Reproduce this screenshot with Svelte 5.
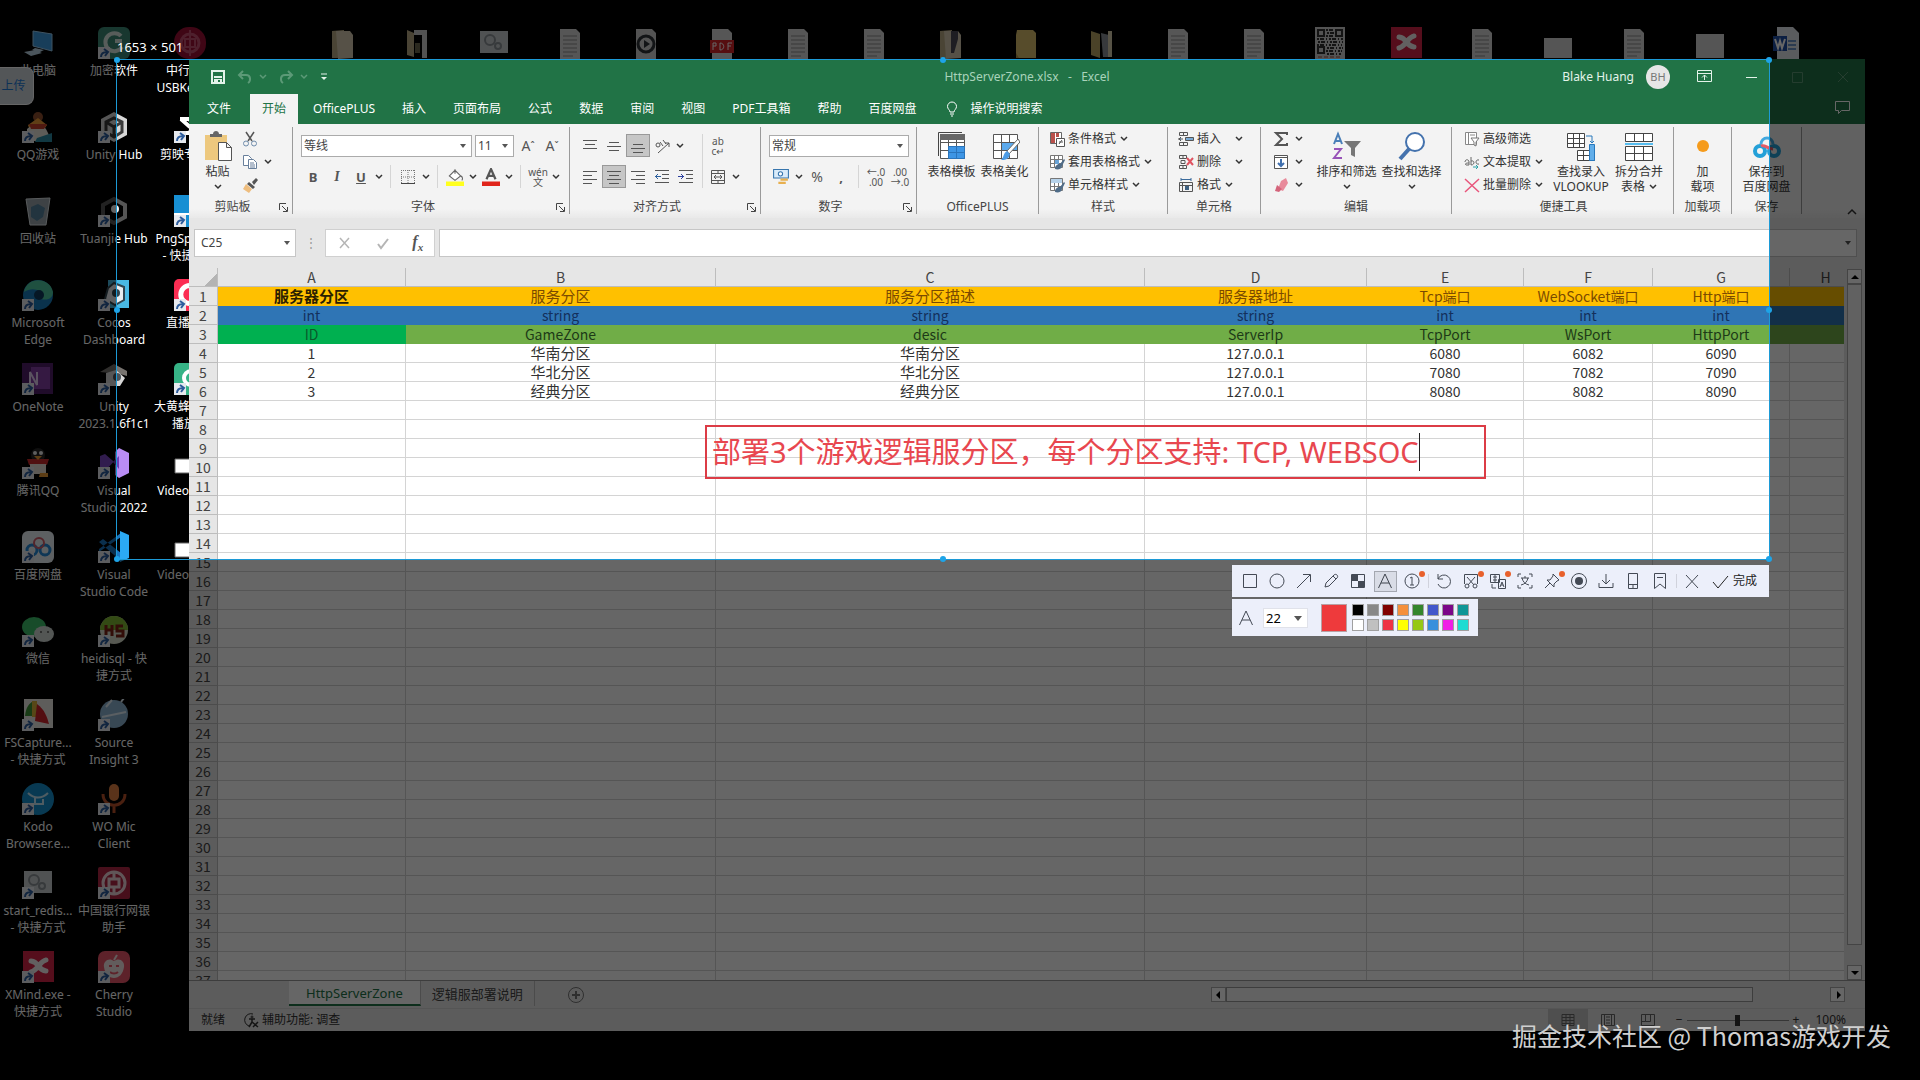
<script>
	let color = $state('#ee3a3c');
	let note = $state('部署3个游戏逻辑服分区，每个分区支持: TCP, WEBSOC');
	let zoom = $state(50);

	const svg = (body, size = 16, box = size) =>
		`<svg width="${size}" height="${size}" viewBox="0 0 ${box} ${box}" fill="none" stroke="currentColor" aria-hidden="true">${body}</svg>`;

	const sheetDoc = '<path fill="#d8d8d8" stroke="none" d="M6 2h16l4 4v26H6z"/><path stroke="#8c8c8c" d="M9 9h14M9 13h14M9 17h14M9 21h14M9 25h14M9 29h10"/>';
	const windowDoc = '<path fill="#c9cccf" stroke="none" d="M2 4h28v22H2z"/><circle cx="12" cy="13" r="5" stroke="#8b9196" stroke-width="2"/><circle cx="20" cy="19" r="3" stroke="#8b9196" stroke-width="2"/>';
	const folder = '<path fill="#b9ab86" stroke="none" d="M6 4l12-1v28H6z"/><path fill="#d6cbb1" stroke="none" d="M10 4h14l3 4v23l-15 1z"/>';

	const art = {
		pc: '<path fill="#3d9be0" stroke="#9ccdf0" d="M11 4l19 3v17l-19-5z"/><path fill="#bcd5e6" stroke="none" d="M13 21l9 2-4 2-8-2zM2 25l11-2 7 3-11 3z"/>',
		lock: '<rect width="32" height="32" rx="6" fill="#3c8b76" stroke="none"/><path stroke="#d9e8e2" stroke-width="4" d="M23 9a9 9 0 1 0 1 11M17 14h7"/>',
		bank: '<rect width="32" height="32" rx="15" fill="#9e0f35" stroke="none"/><circle cx="16" cy="16" r="9" stroke="#c45272" stroke-width="3"/><path stroke="#c45272" stroke-width="2" d="M16 3v26M11 12h10v8H11z"/>',
		penguin: '<circle cx="16" cy="6" r="5" fill="#8f4f2f" stroke="none"/><path fill="#ee9c38" stroke="none" d="M6 14l10-7 9 7-4 6H8z"/><path fill="#e9e5dc" stroke="none" d="M5 18c6-6 17-6 20 2l5 10H5z"/><path fill="#c5402b" stroke="none" d="M7 13h18l-3 5H9z"/><path fill="#2b8ca5" stroke="none" d="M15 27l15-5v9H13z"/>',
		unity: '<path fill="#d7d7d7" stroke="none" d="M16 1l13 7v16l-13 7-13-7V8z"/><path stroke="#3a3a3a" stroke-width="3" d="M16 7l8 4v10l-8 5-8-5V11zM16 16v10M16 16l8-5M16 16l-8-5"/>',
		cut: '<path stroke="#fff" stroke-width="4" d="M6 8h9l7 7M6 22h9l8-8M7 8l9 8"/>',
		bin: '<path fill="#9ba6ac" stroke="#dce2e5" d="M4 4l24-1-4 27H8z"/><path fill="#56829e" stroke="none" d="M9 12l7-3 7 4-2 9-6 4-6-4z"/>',
		tuanjie: '<path stroke="#555" stroke-width="4" d="M16 4l11 6v12l-11 6-11-6V10z"/><circle cx="17" cy="14" r="4" fill="#eee" stroke="none"/>',
		png: '<rect width="32" height="32" fill="#178fd3" stroke="none"/><path stroke="#fff" stroke-width="2" d="M0 19h32"/>',
		edge: '<circle cx="16" cy="16" r="15" fill="#197ebd" stroke="none"/><path fill="#4ec8a1" stroke="none" d="M2 13C5-3 28-2 31 13c0 6-5 9-12 7 3-8-7-13-17-7z"/><circle cx="17" cy="16" r="5" fill="#113b5c" stroke="none"/>',
		cocos: '<rect x="10" y="1" width="21" height="28" fill="#49b9e4" stroke="none"/><path fill="#e8ecef" stroke="#30444f" stroke-width="2" d="M16 4l10 4v13l-9 5-10-6 3-11z"/><circle cx="18" cy="14" r="4" fill="#30444f" stroke="none"/>',
		live: '<rect width="32" height="32" rx="5" fill="#fb2d53" stroke="none"/><path stroke="#fff" stroke-width="5" d="M22 22a9 9 0 1 1 0-13"/>',
		onenote: '<rect width="31" height="31" fill="#52206a" stroke="none"/><rect x="9" y="4" width="19" height="22" fill="#8440a6" stroke="none"/><path stroke="#e3cff0" stroke-width="2" d="M8 22V9l7 13V9"/>',
		unityhome: '<path fill="#77736f" stroke="none" d="M2 9L16 1l13 7v5l-7-2z"/><path fill="#d7d7d7" stroke="none" d="M8 10l10-3 9 8-5 8H8z"/><circle cx="19" cy="14" r="4" fill="#4b5258" stroke="none"/>',
		bee: '<rect width="32" height="32" rx="5" fill="#36b386" stroke="none"/><circle cx="17" cy="15" r="7" stroke="#fff" stroke-width="4"/>',
		qq: '<circle cx="16" cy="8" r="7" fill="#262626" stroke="none"/><circle cx="13" cy="6" r="2" fill="#eee" stroke="none"/><circle cx="19" cy="6" r="2" fill="#eee" stroke="none"/><path fill="#c92a28" stroke="none" d="M5 12h22l-2 6H7z"/><path fill="#e8e0d6" stroke="none" d="M8 17h16v10H8z"/><path fill="#e79a35" stroke="none" d="M12 9h8l-4 4zM18 26h8v4h-9z"/>',
		vs: '<path fill="#7a47c4" stroke="none" d="M2 9l5-2 15 13V8L7 24l-5-3z"/><path fill="#b98cf5" stroke="none" d="M21 1l10 5v20l-10 5-4-3V5z"/><path fill="#6e3fb8" stroke="none" d="M21 9l-6 6 6 7z"/>',
		video: '<path fill="#fff" stroke="#666" d="M1 12h30v14H1z"/>',
		pan: '<rect width="32" height="32" rx="6" fill="#e9eff5" stroke="none"/><circle cx="10" cy="19" r="5" stroke="#268ad6" stroke-width="3"/><circle cx="23" cy="19" r="5" stroke="#268ad6" stroke-width="3"/><circle cx="17" cy="12" r="5" stroke="#d35c6a" stroke-width="2"/>',
		code: '<path fill="#1976c0" stroke="none" d="M1 11l4-3 18 14v8zM1 21l22-15v-4L1 18z"/><path fill="#2ba9f4" stroke="none" d="M22 0l9 4v23l-9 4z"/>',
		wechat: '<ellipse cx="12" cy="12" rx="12" ry="10" fill="#3dbe6a" stroke="none"/><ellipse cx="22" cy="19" rx="10" ry="8" fill="#cfd6d3" stroke="none"/><circle cx="19" cy="17" r="1" fill="#555" stroke="none"/><circle cx="26" cy="17" r="1" fill="#555" stroke="none"/>',
		heidi: '<circle cx="16" cy="15" r="14" fill="#d9dfcc" stroke="none"/><path fill="#7fb834" stroke="none" d="M2 15a14 14 0 0 1 28 0z"/><path stroke="#7d2116" stroke-width="3" d="M8 10v11M14 10v11M8 15h6M25 11h-6v5h6v5h-7"/>',
		fs: '<rect x="2" width="29" height="29" fill="#ece9e4" stroke="none"/><path fill="#3f9437" stroke="none" d="M12 2v15H3C4 8 7 4 12 2z"/><path fill="#d9b23b" stroke="none" d="M10 2h5v16h-5z"/><path fill="#d0242c" stroke="none" d="M15 5c8 6 10 13 12 20l-14-3z"/>',
		insight: '<circle cx="16" cy="15" r="14" fill="#8db4d3" stroke="none"/><path stroke="#e0edf6" stroke-width="2" d="M4 18l24-5M8 8l6-7M23 3l3-4"/>',
		kodo: '<circle cx="16" cy="16" r="16" fill="#1690cc" stroke="none"/><path stroke="#c5e7f6" stroke-width="2" d="M6 10c6 6 14 6 20 0M13 14v7h8v-5"/>',
		mic: '<rect x="11" y="1" width="10" height="17" rx="5" fill="#e08043" stroke="none"/><path stroke="#b8502a" stroke-width="3" d="M5 11c0 15 22 15 22 0M16 23v7"/>',
		boc: '<rect width="32" height="32" rx="2" fill="#b22744" stroke="none"/><circle cx="16" cy="16" r="11" stroke="#f0d8dd" stroke-width="3"/><path stroke="#f0d8dd" stroke-width="3" d="M16 5v6M16 21v6M11 12h10v8H11z"/>',
		xmind: '<rect width="31" height="31" x="1" fill="#d42348" stroke="none"/><path stroke="#f5f1f1" stroke-width="5" stroke-linecap="round" d="M9 10c9 1 6 9 15 10M24 9c-6 1-8 10-15 12"/>',
		cherry: '<rect width="32" height="32" rx="7" fill="#e8566a" stroke="none"/><path fill="#f6e7e6" stroke="none" d="M16 10c5-4 11 0 10 6-1 7-5 11-10 11S7 23 6 16c-1-6 5-10 10-6z"/><path stroke="#f6e7e6" stroke-width="2" d="M16 9l3-5"/><path stroke="#e8566a" stroke-width="2" d="M11 15h3M18 15h3M12 21c2 2 6 2 8 0"/>',
		folder,
		open: '<path fill="#b8ab86" stroke="none" d="M5 3l7 3v24l-7-2z"/><path fill="#cdcdcd" stroke="none" d="M12 3h13v28h-5V8h-8z"/><path fill="#6d684f" stroke="none" d="M13 16h5v10h-5z"/>',
		windowDoc,
		sheetDoc,
		media: '<path fill="#cfcfcf" stroke="none" d="M6 2h16l4 4v26H6z"/><circle cx="16" cy="17" r="8" stroke="#2e3338" stroke-width="3"/><path fill="#2e3338" stroke="none" d="M14 13l6 4-6 4z"/>',
		pdf: '<path fill="#d8d8d8" stroke="none" d="M6 2h16l4 4v26H6z"/><path fill="#d8232a" stroke="none" d="M4 13h24v13H4z"/><path stroke="#fff" d="M7 23v-7h3v3H7M14 16v7c5 0 5-7 0-7M22 23v-7h4M22 19h3"/>',
		mixed: folder + '<path fill="#4b4a55" stroke="none" d="M17 4h7v8l-4 14h-3z"/>',
		yellow: '<path fill="#d9bd6b" stroke="none" d="M7 3h16l3 3v25H6V8z"/><path fill="#b39645" stroke="none" d="M6 26l3 5h-3z"/>',
		split: '<path fill="#b9a565" stroke="none" d="M5 4l9 3v24l-9-3z"/><path fill="#899097" stroke="none" d="M15 6l8 2v22h-6z"/><path fill="#d9d0b0" stroke="none" d="M22 4h4v26h-4z"/>',
		qr: '<rect x="1" y="0" width="30" height="32" fill="#cfcfcf" stroke="none"/><path stroke="#333" stroke-width="2" d="M4 3h6v6H4zM22 3h6v6h-6zM4 20h6v6H4z"/><path stroke="#333" stroke-width="2" stroke-dasharray="2 1 4 2 1 2" d="M12 3h8M13 6h8M12 9h8M3 12h26M4 15h25M3 18h25M13 21h16M12 24h16M13 27h15"/><path stroke="#a54c3c" stroke-dasharray="4 2" d="M4 30h24"/>',
		card: '<path fill="#d4d4d4" stroke="none" d="M2 11h28v20H2z"/>',
		bigcard: '<path fill="#d4d4d4" stroke="none" d="M2 7h28v24H2z"/>',
		word: '<path fill="#e2e5ea" stroke="none" d="M7 0h16l6 6v26H7z"/><path stroke="#6d94c9" stroke-width="2" d="M18 14h8M18 18h8M18 22h8"/><path fill="#1f4fa5" stroke="none" d="M3 9h14v15H3z"/><path stroke="#fff" stroke-width="2" d="M5 12l3 9 2-7 2 7 3-9"/>'
	};

	const item = (icon, lines = [], link = false) => ({ icon, lines, link });

	const desktop = [
		[
			item('pc', ['此电脑']),
			item('penguin', ['QQ游戏'], true),
			item('bin', ['回收站']),
			item('edge', ['Microsoft', 'Edge'], true),
			item('onenote', ['OneNote'], true),
			item('qq', ['腾讯QQ'], true),
			item('pan', ['百度网盘'], true),
			item('wechat', ['微信'], true),
			item('fs', ['FSCapture...', '- 快捷方式'], true),
			item('kodo', ['Kodo', 'Browser.e...'], true),
			item('windowDoc', ['start_redis...', '- 快捷方式'], true),
			item('xmind', ['XMind.exe -', '快捷方式'], true)
		],
		[
			item('lock', ['加密软件'], true),
			item('unity', ['Unity Hub'], true),
			item('tuanjie', ['Tuanjie Hub'], true),
			item('cocos', ['Cocos', 'Dashboard'], true),
			item('unityhome', ['Unity', '2023.1.6f1c1'], true),
			item('vs', ['Visual', 'Studio 2022'], true),
			item('code', ['Visual', 'Studio Code'], true),
			item('heidi', ['heidisql - 快', '捷方式'], true),
			item('insight', ['Source', 'Insight 3'], true),
			item('mic', ['WO Mic', 'Client'], true),
			item('boc', ['中国银行网银', '助手'], true),
			item('cherry', ['Cherry', 'Studio'], true)
		],
		[
			item('bank', ['中行网银', 'USBKey工具']),
			item('cut', ['剪映专业版'], true),
			item('png', ['PngSplit.exe', '- 快捷方式'], true),
			item('live', ['直播伴侣'], true),
			item('bee', ['大黄蜂云课堂', '播放器'], true),
			item('video', ['VideoEditor']),
			item('video', ['VideoEditor'])
		],
		[],
		...['folder', 'open', 'windowDoc', 'sheetDoc', 'media', 'pdf', 'sheetDoc', 'sheetDoc', 'mixed', 'yellow', 'split', 'sheetDoc', 'sheetDoc', 'qr', 'xmind', 'sheetDoc', 'card', 'sheetDoc', 'bigcard', 'word'].map((icon) => [item(icon)])
	];

	const grid = '<path fill="#fff" stroke="#555" d="M3.5 3.5h24v24h-24zM3.5 11.5h24M3.5 19.5h24M11.5 3.5v24M19.5 3.5v24"/>';
	const miniGrid = '<path fill="#fff" stroke="#777" d="M1.5 1.5h12v12h-12zM1.5 5.5h12M1.5 9.5h12M5.5 1.5v12M9.5 1.5v12"/>';

	const icons = {
		save: svg('<path stroke-width="2" d="M2 2h12v12H2zM4 8h8"/><path fill="currentColor" stroke="none" d="M4 10h8v4h-2v-3H8v3H4z"/>'),
		undo: svg('<path stroke-width="2" d="M6 2L2 6l4 4M2 6h7c5 0 5 6 2 8"/>'),
		redo: svg('<path stroke-width="2" d="M10 2l4 4-4 4M14 6H7c-5 0-5 6-2 8"/>'),
		qat: svg('<path d="M2 2h6"/><path fill="currentColor" stroke="none" d="M2 5h6L5 8z"/>', 10),
		ribbonOpts: svg('<path d="M1.5 2.500h14v11h-14zM1.500 5.500h14M8.500 12V7M6 9.500L8.500 7 11 9.500"/>', 17),
		min: svg('<path d="M3 8.500h11"/>'),
		max: svg('<path d="M3.500 3.500h10v10h-10z"/>'),
		close: svg('<path d="M3 3l10 10M13 3L3 13"/>'),
		comment: svg('<path d="M1.500 2.500h14v9h-8l-3 3v-3h-3z"/>', 17),
		bulb: svg('<path d="M6 11c0-2-2.500-3-2.500-5.500a4.500 4.500 0 0 1 9 0C12.500 8 10 9 10 11zM6 13h4M7 15h2"/>'),
		caret: svg('<path stroke-width="1.500" d="M1 2l3 3 3-3"/>', 8),
		launch: svg('<path d="M1.500 8V1.500H8M4 4l5 5M9.500 5v4.500H5"/>', 11),
		paste: svg('<path fill="#edc87e" stroke="none" d="M2 4h22v25H2z"/><path fill="#666" stroke="none" d="M7 6V3h3c0-4 6-4 6 0h3v3z"/><path fill="#fff" stroke="#555" d="M15.500 11.500h8l5 5v13h-13zM23.500 11.500v5h5"/>', 30),
		cut: svg('<path stroke="#555" stroke-width="1.500" d="M4 1l6 9M12 1l-6 9"/><circle cx="4" cy="12.500" r="2.500" stroke="#6f8cab"/><circle cx="12" cy="12.500" r="2.500" stroke="#6f8cab"/>'),
		copy: svg('<path fill="#fff" stroke="#687f9b" d="M1.500 1.500h5l3 3v7h-8z"/><path fill="#fff" stroke="#687f9b" d="M6.500 5.500h5l3 3v6h-8zM8 9h4M8 11h5M8 13h5"/>'),
		brush: svg('<path fill="#555" stroke="none" d="M10 5l4-4 2 2-4 5zM7 5l6 5-2 2-6-5z"/><path fill="#eebd7e" stroke="none" d="M4 7l6 5-3 4-6-4z"/>'),
		bold: '<b>B</b>',
		italic: '<i>I</i>',
		underline: '<b><u>U</u></b>',
		bigA: 'A<sup>ˆ</sup>',
		smallA: 'A<sup>ˇ</sup>',
		borders: svg('<path stroke="#777" stroke-dasharray="1 1" d="M1.500 1v13M8 1v13M14.500 1v13M1 1.500h14M1 8h14"/><path stroke="#444" d="M1 14.500h14"/>'),
		fill: svg('<path fill="#fff" stroke="#666" d="M3 7l5-5 5 5-5 4zM8 1v4M13 7c2 1 2 3 1 4"/><path fill="#ffff1e" stroke="none" d="M0 12h16v4H0z"/>', 18, 16),
		fontColor: svg('<path stroke="#555" stroke-width="2" d="M4 10L8 1l4 9M5 7h6"/><path fill="#e0241b" stroke="none" d="M0 12h16v4H0z"/>', 18, 16),
		wen: '<span class="wen">wén<br />文</span>',
		aTop: svg('<path d="M1 2.500h14M3 6.500h10M1 10.500h14"/>'),
		aMid: svg('<path d="M3 4.500h10M1 8.500h14M3 12.500h10"/>'),
		aBottom: svg('<path d="M3 6.500h10M1 10.500h14M3 14.500h10"/>'),
		orient: svg('<path d="M4 15L15 5M15 9V5h-4"/><circle cx="4" cy="7" r="2"/><path d="M6 4l3 4M9 2l3 4"/>'),
		wrap: '<span class="wrap">ab<br />c↵</span>',
		left: svg('<path d="M1 2.500h14M1 6.500h9M1 10.500h14M1 14.500h9"/>'),
		center: svg('<path d="M1 2.500h14M3 6.500h10M1 10.500h14M3 14.500h10"/>'),
		right: svg('<path d="M1 2.500h14M6 6.500h9M1 10.500h14M6 14.500h9"/>'),
		outdent: svg('<path d="M1 1.500h14M8 5.500h7M8 9.500h7M1 13.500h14"/><path stroke="#2b5f9e" d="M7 7.500H1M4 5L1.500 7.500 4 10"/>'),
		indent: svg('<path d="M1 1.500h14M8 5.500h7M8 9.500h7M1 13.500h14"/><path stroke="#2b3f9e" d="M0 7.500h6M3 5l2.500 2.500L3 10"/>'),
		merge: svg('<path d="M1.500 1.500h13v13h-13zM1.500 4.500h13M1.500 11.500h13M8 1.500v3M8 11.500v3M4 8h8M6 6L4 8l2 2M10 6l2 2-2 2"/>'),
		money: svg('<path fill="#d9ebfa" stroke="#3775ad" d="M1.500 1.500h14v8h-14z"/><circle cx="8" cy="5.500" r="2" fill="#fff" stroke="#3775ad"/><path stroke="#e8b04f" stroke-width="2" d="M8 11h7M6 14h7"/>', 18, 17),
		percent: '%',
		comma: '<b>,</b>',
		decInc: '<span class="dec">←.0<br />.00</span>',
		decDec: '<span class="dec">.00<br />→.0</span>',
		tplate: svg('<path stroke="#444" d="M1.500 25V1.500H25"/>' + grid + '<path fill="#666" stroke="none" d="M3 3h25v6H3z"/><path fill="#3d95e5" stroke="#2a74bb" d="M11.500 15.500h16v12h-16zM19.500 15.500v12M11.500 21.500h16"/>', 30),
		beauty: svg(grid + '<path fill="#5ba9ec" stroke="none" d="M12 12h15v7H12z"/><path fill="#fff" stroke="#666" d="M28 8L17 20l2 3L30 11z"/><path fill="#4b9be6" stroke="none" d="M17 20l3 3c-1 6-6 6-9 6 3-2 2-7 6-9z"/>', 30),
		cond: svg('<path fill="#fff" stroke="#666" d="M1.500 1.500h11v11h-11z"/><path fill="#b9504b" stroke="none" d="M2 2h4v10H2zM7 2h3v4H7z"/><path fill="#fff" stroke="#555" d="M7.500 7.500h8v8h-8zM10 13l3-4M10 11h4"/>'),
		tableFmt: svg(miniGrid + '<path fill="#69a4d8" stroke="none" d="M6 6h4v4H6z"/><path fill="#4f6c88" stroke="none" d="M6 15c0-4 3-5 5-5l4-5 1 1-3 6c0 3-4 4-7 3z"/>'),
		cellFmt: svg(miniGrid + '<path fill="#b6d2ea" stroke="none" d="M2 2h11v4H2z"/><path fill="#4f6c88" stroke="none" d="M6 15c0-4 3-5 5-5l4-5 1 1-3 6c0 3-4 4-7 3z"/>'),
		insCell: svg('<path stroke="#555" d="M1.500 1.500h8v3h-8zM1.500 11.500h8v3h-8zM5.500 1v4M5.500 11v4"/><path fill="#79aad5" stroke="#555" d="M7.500 6.500h8v3h-8zM5 8H0M3 6L1 8l2 2"/>'),
		delCell: svg('<path stroke="#555" d="M1.500 1.500h7v3h-7zM1.500 11.500h7v3h-7zM5 1v4M5 11v4M3 6.500h4v3H3z"/><path stroke="#e05360" stroke-width="2" d="M9 4l6 7M15 4l-6 7"/>'),
		fmtCell: svg('<path stroke="#3a6b9c" d="M3 1v3M13 1v3M3 2.500h10"/><path stroke="#555" d="M1.500 5.500h13v9h-13zM4.500 5.500v9M1.500 8.500h13"/><path fill="#3d5f80" stroke="none" d="M7 9h4v4H7z"/>'),
		sum: svg('<path stroke="#555" stroke-width="2" d="M14 4V2H3l6 6-6 6h11v-2"/>'),
		fillDown: svg('<path fill="#fff" stroke="#555" d="M1.500 1.500h13v13h-13zM1.500 3.500h13"/><path stroke="#3f6fae" stroke-width="2" d="M8 5v7M5 9l3 3 3-3"/>'),
		eraser: svg('<path fill="#e88a9b" stroke="none" d="M8 4l5-3 2 5-5 8-5-2z"/><path fill="#d4647b" stroke="none" d="M4 8l5 4-3 3-4-1z"/>'),
		sort: svg('<path stroke="#4a7fb8" stroke-width="2" d="M2 13L6 3l4 10M3 10h6"/><path stroke="#9752b8" stroke-width="2" d="M2 18h7l-7 9h8"/><path fill="#777" stroke="none" d="M12 10h17l-6 7v9l-4-2v-7z"/>', 30),
		find: svg('<circle cx="18" cy="11" r="9" fill="#fff" stroke="#4472ad" stroke-width="2"/><path stroke="#4472ad" stroke-width="4" d="M12 18L3 28"/>', 30),
		adv: svg('<path fill="#fff" stroke="#888" d="M1.500 1.500h11v12h-11zM4.500 2v11M6 4h5"/><path fill="#fff" stroke="#777" d="M7 7h8l-3 4v4l-2-1v-3z"/>'),
		abc: svg('<path stroke="#666" d="M1 8c0-3 4-3 4 0v3H2c-2-2 2-2 3-2M7 3v8c4 0 4-5 0-4M15 6c-4-1-4 5 0 4"/><path stroke="#2ba3a8" d="M9 13h5M12 11l2 2-2 2"/>'),
		del: svg('<path stroke="#e8557b" stroke-width="1.500" d="M1 2l14 13M15 2L1 15"/>'),
		lookup: svg('<path fill="#fff" stroke="#444" d="M1.500 2.500h17v14h-17zM1.500 7.500h17M1.500 12.500h17M7.500 2.500v14M13.500 2.500v14M11.500 19.500h17v10h-17zM11.500 24.500h17M17.500 19.500v10"/><path fill="#62aeea" stroke="#2878bc" d="M23.500 13.500h5v16h-5z"/><path stroke="#2878bc" d="M20 5h6v7M24 10l2 2 2-2"/>', 30),
		splitTbl: svg('<path fill="#fff" stroke="#444" d="M1.500 2.500h27v8h-27zM10.500 2.500v8M19.500 2.500v8M1.500 15.500h27v14h-27zM1.500 22.500h27M10.500 15.500v14M19.500 15.500v14"/><path stroke="#55bdf0" stroke-width="2" d="M1 13h28"/>', 30),
		dot: svg('<circle cx="15" cy="15" r="6" fill="#f59b1c" stroke="none"/>', 30),
		cloud: svg('<circle cx="8" cy="20" r="5" stroke="#23a0d8" stroke-width="4"/><circle cx="22" cy="20" r="5" stroke="#23a0d8" stroke-width="4"/><path stroke="#41a8df" stroke-width="3" d="M9 13a6 6 0 0 1 12 0"/><path stroke="#e55b66" stroke-width="3" d="M9 15c4-2 6 3 12 3"/>', 30),
		collapse: svg('<path stroke-width="1.500" d="M1 7l4-4 4 4"/>', 10),
		xGray: svg('<path stroke="#b5b5b5" stroke-width="1.500" d="M3 3l9 10M12 3L3 13"/>'),
		okGray: svg('<path stroke="#b5b5b5" stroke-width="2" d="M3 9l3 4 7-9"/>'),
		access: svg('<path d="M10 2a6 6 0 1 0-4 12"/><circle cx="9" cy="5" r="1"/><path stroke-width="1.500" d="M6 7h6M9 7v3l-3 5M9 10l6 5M10 15l5-5"/>'),
		plus: svg('<circle cx="9" cy="9" r="7.500"/><path stroke-width="2" d="M9 5v8M5 9h8"/>', 18),
		viewNormal: svg('<path d="M2 2.500h12v11H2zM2 5.500h12M2 8.500h12M2 11.500h12M6 2v12M10 2v12"/>'),
		viewPage: svg('<path d="M1.500 2.500h13v11h-13zM4.500 2.500v11M11.500 2.500v11M6 5h4M6 8h4M6 11h4"/>'),
		viewBreak: svg('<path d="M1.500 2.500h13v11h-13zM5.500 2.500v7h5v-7M1.500 9.500h4"/>'),
		arrowL: svg('<path fill="currentColor" stroke="none" d="M6 1v8L2 5z"/>', 10),
		arrowR: svg('<path fill="currentColor" stroke="none" d="M4 1v8l4-4z"/>', 10),
		arrowU: svg('<path fill="currentColor" stroke="none" d="M1 7h8L5 3z"/>', 10),
		arrowD: svg('<path fill="currentColor" stroke="none" d="M1 3h8L5 7z"/>', 10)
	};

	const shot = {
		rect: '<path d="M2.500 2.500h13v13h-13z"/>',
		circle: '<circle cx="9" cy="9" r="7"/>',
		arrow: '<path d="M2 16L15 3M8 2.500h7.500V10"/>',
		pencil: '<path d="M3 15l1-4 8-8c2-2 5 1 3 3l-8 8zM11 4l3 3"/>',
		mosaic: '<path d="M2.500 2.500h13v13h-13z"/><path fill="currentColor" stroke="none" d="M2 3h7v6H2zM9 9h6v6H9z"/>',
		text: '<path d="M2.500 16L9 2l6.500 14M5 11h8"/>',
		number: '<circle cx="9" cy="9" r="7"/><path d="M7 6l2-1v8M7 13h4"/>',
		undo: '<path d="M3 2v5h5M3 7a6.500 6.500 0 1 1 0 5"/>',
		scissors: '<path d="M2.500 12V2.500h13V12M5 5l7 8M13 5l-7 8"/><circle cx="5" cy="14" r="2"/><circle cx="13" cy="14" r="2"/>',
		translate: '<path d="M1.500 2.500h9v8h-9zM4 5h4M4 8h4M6 3v7"/><path d="M9.500 7.500h7v9h-7zM11 15l2-5 2 5M12 13h2M3 12v4h4"/>',
		ocr: '<path d="M2 5V2h3M13 2h3v3M16 13v3h-3M5 16H2v-3M5 6h8M9 4v2M12 6c-1 4-3 6-7 7M6 6c1 4 3 6 7 7"/>',
		pin: '<path d="M10 2l6 6-2 1-3 3v3L4 8h3l3-4zM7 11l-5 5"/>',
		record: '<circle cx="9" cy="9" r="7.500"/><circle cx="9" cy="9" r="4" fill="currentColor" stroke="none"/>',
		download: '<path d="M9 2v10M5 8l4 4 4-4M2 11v4.500h14V11"/>',
		phone: '<path d="M4.500 1.500h9v15h-9zM4.500 12.500h9M9 12v4"/>',
		bookmark: '<path d="M3.500 1.500h11v15L9 12l-5.500 4.500zM6 5.500h6"/>'
	};

	const shotTools = [
		{ icon: 'rect', label: '矩形' },
		{ icon: 'circle', label: '椭圆' },
		{ icon: 'arrow', label: '箭头' },
		{ icon: 'pencil', label: '画笔' },
		{ icon: 'mosaic', label: '马赛克' },
		{ icon: 'text', label: '文字', active: true },
		{ icon: 'number', label: '序号', badge: true }
	];
	const shotActions = [
		{ icon: 'undo', label: '撤销' },
		{ icon: 'scissors', label: '裁剪', badge: true },
		{ icon: 'translate', label: '翻译', badge: true },
		{ icon: 'ocr', label: '识别文字' },
		{ icon: 'pin', label: '固定', badge: true },
		{ icon: 'record', label: '录屏' },
		{ icon: 'download', label: '保存' },
		{ icon: 'phone', label: '发送到手机' },
		{ icon: 'bookmark', label: '收藏' }
	];

	const palette = [
		'#000000', '#888888', '#800000', '#f5903c', '#34852c', '#4257cb', '#7b0788', '#109696',
		'#ffffff', '#c0c0c0', '#ee3344', '#ffff00', '#96c814', '#3690dc', '#f01ee6', '#1edcd2'
	];

	const tabs = ['插入', '页面布局', '公式', '数据', '审阅', '视图', 'PDF工具箱', '帮助', '百度网盘'];

	const columns = [
		{ name: 'A', width: 188 },
		{ name: 'B', width: 310 },
		{ name: 'C', width: 429 },
		{ name: 'D', width: 222 },
		{ name: 'E', width: 157 },
		{ name: 'F', width: 129 },
		{ name: 'G', width: 137 },
		{ name: 'H', width: 72 }
	];

	const cells = [
		['服务器分区', '服务分区', '服务分区描述', '服务器地址', 'Tcp端口', 'WebSocket端口', 'Http端口'],
		['int', 'string', 'string', 'string', 'int', 'int', 'int'],
		['ID', 'GameZone', 'desic', 'ServerIp', 'TcpPort', 'WsPort', 'HttpPort'],
		['1', '华南分区', '华南分区', '127.0.0.1', '6080', '6082', '6090'],
		['2', '华北分区', '华北分区', '127.0.0.1', '7080', '7082', '7090'],
		['3', '经典分区', '经典分区', '127.0.0.1', '8080', '8082', '8090']
	];
	const rows = Array.from({ length: 37 }, (_, i) => cells[i] ?? []);
	const isCjk = (text) => /^[\u4e00-\u9fff]/.test(text ?? '');
</script>

{#snippet tool(icon, label, caret = false, active = false)}
	<button class="tool" class:active aria-label={label}>{@html icons[icon]}</button>
	{#if caret}
		<button class="drop" aria-label="{label}选项">{@html icons.caret}</button>
	{/if}
{/snippet}

{#snippet small(icon, text, caret = true, wide = false)}
	<button class="small">
		<span class="small-icon">{@html icons[icon]}</span>
		{text}
		{#if caret}<span class="small-caret" class:wide>{@html icons.caret}</span>{/if}
	</button>
{/snippet}

{#snippet large(icon, first, second = '', caret = false)}
	<button class="large">
		{@html icons[icon]}
		<span class="line">{first}</span>
		<span class="line">{second}{#if caret}<span class="line-caret" class:alone={!second}>{@html icons.caret}</span>{/if}</span>
	</button>
{/snippet}

{#snippet groupName(name, launcher = false)}
	<div class="group-name" class:has-launcher={launcher}>
		<span>{name}</span>
		{#if launcher}<button class="launcher" aria-label="{name}设置">{@html icons.launch}</button>{/if}
	</div>
{/snippet}

<main class="desktop">
	<div class="shortcuts">
		{#each desktop as column}
			<div class="shortcuts-col">
				{#each column as entry}
					<div class="shortcut">
						<div class="shortcut-icon">
							{@html svg(art[entry.icon], 32)}
							{#if entry.link}<span class="link-mark">{@html svg('<path stroke="#2c5c9d" stroke-width="2" d="M3 10c0-4 2-5 6-5M6 2l4 3-3 4"/>', 12)}</span>{/if}
						</div>
						{#each entry.lines as line}<span class="shortcut-line">{line}</span>{/each}
					</div>
				{/each}
			</div>
		{/each}
	</div>
	<button class="upload">上传</button>

	<section class="excel">
		<header class="titlebar">
			<div class="quick">
				<button aria-label="保存">{@html icons.save}</button>
				<button class="faded" aria-label="撤消">{@html icons.undo}{@html icons.caret}</button>
				<button class="faded" aria-label="恢复">{@html icons.redo}{@html icons.caret}</button>
				<button aria-label="自定义快速访问工具栏">{@html icons.qat}</button>
			</div>
			<span class="doc-title">HttpServerZone.xlsx&nbsp;&nbsp; -&nbsp;&nbsp; Excel</span>
			<div class="account">
				<span>Blake Huang</span>
				<span class="avatar">BH</span>
				<button aria-label="功能区显示选项">{@html icons.ribbonOpts}</button>
				<button aria-label="最小化">{@html icons.min}</button>
				<button class="faded" aria-label="最大化">{@html icons.max}</button>
				<button class="faded" aria-label="关闭">{@html icons.close}</button>
			</div>
		</header>

		<nav class="tabs">
			<button class="tab file">文件</button>
			<button class="tab current">开始</button>
			<button class="tab">OfficePLUS</button>
			{#each tabs as tab}
				<button class="tab">{tab}</button>
			{/each}
			<button class="tell">{@html icons.bulb} 操作说明搜索</button>
			<button class="comments" aria-label="批注">{@html icons.comment}</button>
		</nav>

		<div class="ribbon">
			<div class="group clipboard">
				<div class="body">
					{@render large('paste', '粘贴', '', true)}
					<div class="stack">
						<div class="row">{@render tool('cut', '剪切')}</div>
						<div class="row">{@render tool('copy', '复制', true)}</div>
						<div class="row">{@render tool('brush', '格式刷')}</div>
					</div>
				</div>
				{@render groupName('剪贴板', true)}
			</div>

			<div class="group font">
				<div class="body two">
					<div class="row">
						<span class="combo family"><select aria-label="字体"><option>等线</option></select></span>
						<span class="combo size"><select aria-label="字号"><option>11</option></select></span>
						{@render tool('bigA', '增大字号')}
						{@render tool('smallA', '减小字号')}
					</div>
					<div class="row">
						{@render tool('bold', '加粗')}
						{@render tool('italic', '倾斜')}
						{@render tool('underline', '下划线', true)}
						<i class="sep"></i>
						{@render tool('borders', '边框', true)}
						<i class="sep"></i>
						{@render tool('fill', '填充颜色', true)}
						{@render tool('fontColor', '字体颜色', true)}
						<i class="sep"></i>
						{@render tool('wen', '拼音指南', true)}
					</div>
				</div>
				{@render groupName('字体', true)}
			</div>

			<div class="group align">
				<div class="body">
					<div class="two">
						<div class="row">
							{@render tool('aTop', '顶端对齐')}
							{@render tool('aMid', '垂直居中')}
							{@render tool('aBottom', '底端对齐', false, true)}
							{@render tool('orient', '方向', true)}
						</div>
						<div class="row">
							{@render tool('left', '左对齐')}
							{@render tool('center', '居中', false, true)}
							{@render tool('right', '右对齐')}
							{@render tool('outdent', '减少缩进量')}
							{@render tool('indent', '增加缩进量')}
						</div>
					</div>
					<i class="sep tall"></i>
					<div class="two">
						<div class="row">{@render tool('wrap', '自动换行')}</div>
						<div class="row">{@render tool('merge', '合并后居中', true)}</div>
					</div>
				</div>
				{@render groupName('对齐方式', true)}
			</div>

			<div class="group number">
				<div class="body two">
					<div class="row">
						<span class="combo format"><select aria-label="数字格式"><option>常规</option></select></span>
					</div>
					<div class="row">
						{@render tool('money', '会计数字格式', true)}
						{@render tool('percent', '百分比样式')}
						{@render tool('comma', '千位分隔样式')}
						<i class="sep"></i>
						{@render tool('decInc', '增加小数位数')}
						{@render tool('decDec', '减少小数位数')}
					</div>
				</div>
				{@render groupName('数字', true)}
			</div>

			<div class="group plus">
				<div class="body">
					{@render large('tplate', '表格模板')}
					{@render large('beauty', '表格美化')}
				</div>
				{@render groupName('OfficePLUS')}
			</div>

			<div class="group styles">
				<div class="body stack">
					{@render small('cond', '条件格式')}
					{@render small('tableFmt', '套用表格格式')}
					{@render small('cellFmt', '单元格样式')}
				</div>
				{@render groupName('样式')}
			</div>

			<div class="group cells">
				<div class="body stack">
					{@render small('insCell', '插入', true, true)}
					{@render small('delCell', '删除', true, true)}
					{@render small('fmtCell', '格式')}
				</div>
				{@render groupName('单元格')}
			</div>

			<div class="group edit">
				<div class="body">
					<div class="stack">
						<div class="row">{@render tool('sum', '自动求和', true)}</div>
						<div class="row">{@render tool('fillDown', '填充', true)}</div>
						<div class="row">{@render tool('eraser', '清除', true)}</div>
					</div>
					{@render large('sort', '排序和筛选', '', true)}
					{@render large('find', '查找和选择', '', true)}
				</div>
				{@render groupName('编辑')}
			</div>

			<div class="group quicktools">
				<div class="body">
					<div class="stack">
						{@render small('adv', '高级筛选', false)}
						{@render small('abc', '文本提取')}
						{@render small('del', '批量删除')}
					</div>
					{@render large('lookup', '查找录入', 'VLOOKUP')}
					{@render large('splitTbl', '拆分合并', '表格', true)}
				</div>
				{@render groupName('便捷工具')}
			</div>

			<div class="group addins">
				<div class="body">{@render large('dot', '加', '载项')}</div>
				{@render groupName('加载项')}
			</div>

			<div class="group store">
				<div class="body">{@render large('cloud', '保存到', '百度网盘')}</div>
				{@render groupName('保存')}
			</div>

			<button class="collapse" aria-label="折叠功能区">{@html icons.collapse}</button>
		</div>

		<div class="formula">
			<span class="combo namebox"><input aria-label="名称框" value="C25" /></span>
			<span class="grip">⋮</span>
			<div class="formula-actions">
				<button aria-label="取消">{@html icons.xGray}</button>
				<button aria-label="输入">{@html icons.okGray}</button>
				<button class="fx" aria-label="插入函数">f<sub>x</sub></button>
			</div>
			<span class="combo formula-field"><input aria-label="编辑栏" /></span>
		</div>

		<div class="sheet">
			<div class="sheet-view">
				<table>
					<colgroup>
						<col style="width: 29px" />
						{#each columns as column}<col style="width: {column.width}px" />{/each}
					</colgroup>
					<thead>
						<tr>
							<th class="corner" aria-label="全选"></th>
							{#each columns as column}<th>{column.name}</th>{/each}
						</tr>
					</thead>
					<tbody>
						{#each rows as row, r}
							<tr class="r{r + 1}">
								<th>{r + 1}</th>
								{#each columns as column, c}
									<td class:cjk={isCjk(row[c])}>{row[c] ?? ''}</td>
								{/each}
							</tr>
						{/each}
					</tbody>
				</table>
			</div>
			<div class="vscroll">
				<button aria-label="向上滚动">{@html icons.arrowU}</button>
				<span class="vthumb"></span>
				<button aria-label="向下滚动">{@html icons.arrowD}</button>
			</div>
		</div>

		<div class="sheet-tabs">
			<button class="sheet-tab on">HttpServerZone</button>
			<button class="sheet-tab">逻辑服部署说明</button>
			<button class="add-sheet" aria-label="新工作表">{@html icons.plus}</button>
			<div class="hscroll">
				<button aria-label="向左滚动">{@html icons.arrowL}</button>
				<span class="hthumb"></span>
				<button class="end" aria-label="向右滚动">{@html icons.arrowR}</button>
			</div>
		</div>

		<footer class="status">
			<span>就绪</span>
			<span class="access">{@html icons.access} 辅助功能: 调查</span>
			<div class="views">
				<button class="view on" aria-label="普通">{@html icons.viewNormal}</button>
				<button class="view" aria-label="页面布局">{@html icons.viewPage}</button>
				<button class="view" aria-label="分页预览">{@html icons.viewBreak}</button>
				<button class="zoom-out" aria-label="缩小">−</button>
				<input type="range" aria-label="缩放" min="0" max="100" bind:value={zoom} />
				<button aria-label="放大">+</button>
				<span class="percent">100%</span>
			</div>
		</footer>
	</section>

	<!-- Capture region; its shadow dims everything outside -->
	<section class="capture">
		<span class="capture-size">1653 × 501</span>
		<i class="knob tl"></i><i class="knob tc"></i><i class="knob tr"></i>
		<i class="knob ml"></i><i class="knob mr"></i>
		<i class="knob bl"></i><i class="knob bc"></i><i class="knob br"></i>

		<div class="note">
			<input aria-label="标注文字" bind:value={note} /><span class="cursor"></span>
		</div>

		<div class="shot">
			<div class="shot-bar">
				{#each shotTools as t}
					<button class="shot-tool" class:on={t.active} aria-label={t.label}>
						{@html svg(shot[t.icon], 18)}
						{#if t.badge}<i class="badge"></i>{/if}
					</button>
				{/each}
				<i class="shot-sep"></i>
				{#each shotActions as t}
					<button class="shot-tool" aria-label={t.label}>
						{@html svg(shot[t.icon], 18)}
						{#if t.badge}<i class="badge"></i>{/if}
					</button>
				{/each}
				<i class="shot-sep"></i>
				<button class="shot-tool" aria-label="取消">{@html svg('<path d="M3 3l12 13M15 3L3 16"/>', 18)}</button>
				<button class="done">{@html svg('<path d="M2 10l5 6L17 4"/>', 18)} 完成</button>
			</div>
			<div class="shot-options">
				{@html svg(shot.text, 18)}
				<span class="combo shot-size"><select aria-label="字号"><option>22</option></select></span>
				<span class="swatch" style="background: {color}"></span>
				<div class="palette">
					{#each palette as p}
						<button style="background: {p}" aria-label={p} onclick={() => (color = p)}></button>
					{/each}
				</div>
			</div>
		</div>
	</section>

	<p class="watermark">掘金技术社区 @ Thomas游戏开发</p>
</main>

<style>
	:global(body) {
		margin: 0;
		background: #000;
	}

	.desktop {
		position: relative;
		height: 100vh;
		overflow: hidden;
		background: #000;
		font-family: 'Noto Sans', 'Noto Sans CJK SC', sans-serif;
		font-size: 12px;
		line-height: 16px;
		color: #333;
	}

	.desktop :global(svg) {
		display: block;
		flex: none;
	}

	button,
	input,
	select {
		margin: 0;
		padding: 0;
		border: 0;
		background: none;
		color: inherit;
		font: inherit;
		outline: none;
		white-space: nowrap;
	}

	select {
		appearance: none;
	}

	/* Desktop shortcuts */
	.shortcuts {
		display: flex;
		padding-top: 27px;
		color: #fff;
	}

	.shortcuts-col {
		flex: none;
		width: 76px;
	}

	.shortcut {
		display: flex;
		flex-direction: column;
		align-items: center;
		height: 84px;
	}

	.shortcut-icon {
		position: relative;
		margin-bottom: 3px;
	}

	.link-mark {
		position: absolute;
		left: 0;
		bottom: 0;
		background: #e6e9ee;
	}

	.shortcut-line {
		line-height: 17px;
		white-space: nowrap;
	}

	.upload {
		position: absolute;
		left: 0;
		top: 67px;
		width: 34px;
		height: 38px;
		padding-right: 6px;
		border: 1px solid #fff;
		border-left: 0;
		border-radius: 0 8px 8px 0;
		background: #cfd6dd;
		color: #1f7bd6;
	}

	/* Excel window */
	.excel {
		position: absolute;
		top: 59px;
		right: 55px;
		bottom: 49px;
		left: 189px;
		display: flex;
		flex-direction: column;
		background: #e6e6e6;
	}

	.titlebar {
		display: flex;
		align-items: center;
		justify-content: space-between;
		flex: none;
		height: 35px;
		background: #217346;
		color: #e4f3ea;
	}

	.quick {
		display: flex;
		align-items: center;
		gap: 11px;
		width: 400px;
		box-sizing: border-box;
		padding-left: 21px;
	}

	.quick button {
		display: flex;
		align-items: center;
		gap: 6px;
	}

	.faded {
		opacity: 0.3;
	}

	.doc-title {
		color: #a9d3bb;
	}

	.account {
		display: flex;
		align-items: center;
		justify-content: flex-end;
		gap: 30px;
		width: 400px;
		box-sizing: border-box;
		padding-right: 14px;
	}

	.avatar {
		width: 24px;
		height: 24px;
		margin: 0 -4px 0 -18px;
		border-radius: 50%;
		background: #e6e6e6;
		color: #777;
		font-size: 11px;
		line-height: 24px;
		text-align: center;
	}

	.tabs {
		display: flex;
		flex: none;
		gap: 3px;
		height: 30px;
		padding-left: 6px;
		background: #217346;
		color: #fff;
	}

	.tab {
		padding: 0 12px 1px;
	}

	.file {
		margin-right: 4px;
	}

	.current {
		background: #f3f3f3;
		color: #217346;
	}

	.tell {
		display: flex;
		align-items: center;
		gap: 10px;
		padding: 0 0 1px 13px;
	}

	.comments {
		margin: 0 14px 4px auto;
	}

	.ribbon {
		display: flex;
		flex: none;
		height: 94px;
		padding-top: 3px;
		box-sizing: border-box;
		background: linear-gradient(#f3f3f3 85px, #e9e9e9);
	}

	.group {
		display: flex;
		flex-direction: column;
		flex: none;
		height: 87px;
		box-sizing: border-box;
		border-right: 1px solid #9a9a9a;
		padding-left: 8px;
	}

	.clipboard { width: 104px; }
	.font { width: 277px; }
	.align { width: 191px; }
	.number { width: 156px; }
	.plus { width: 122px; }
	.styles { width: 129px; }
	.cells { width: 93px; }
	.edit { width: 191px; }
	.quicktools { width: 222px; }
	.addins { width: 58px; }
	.store { width: 70px; }

	.addins,
	.store {
		padding-left: 0;
	}

	.body {
		display: flex;
		flex: none;
		height: 72px;
	}

	.stack {
		display: flex;
		flex-direction: column;
	}

	.stack .row {
		height: 23px;
	}

	.two {
		display: flex;
		flex-direction: column;
		box-sizing: border-box;
		gap: 8px;
		padding-top: 7px;
	}

	.row {
		display: flex;
		align-items: center;
		height: 23px;
	}

	.align .body > .two:first-child {
		width: 120px;
	}

	.tool {
		display: flex;
		align-items: center;
		justify-content: center;
		flex: none;
		width: 24px;
		height: 23px;
		box-sizing: border-box;
		font-size: 14px;
		color: #555;
	}

	.tool.active {
		border: 1px solid #999;
		background: #c6c6c6;
	}

	.tool :global(i) {
		font-family: 'Liberation Serif', serif;
		font-weight: 700;
	}

	.tool :global(b) {
		font-size: 13px;
	}

	.tool :global(sup) {
		font-size: 10px;
		line-height: 8px;
	}

	.tool :global(.wen),
	.tool :global(.wrap),
	.tool :global(.dec) {
		display: block;
		font-size: 10px;
		line-height: 10px;
		text-align: center;
	}

	.drop {
		display: flex;
		justify-content: center;
		flex: none;
		width: 12px;
	}

	.sep {
		flex: none;
		width: 1px;
		height: 23px;
		margin: 0 5px;
		background: #d5d5d5;
	}

	.sep.tall {
		height: 54px;
		margin: 7px 3px 0 4px;
	}

	.combo {
		position: relative;
		display: flex;
		flex: none;
		height: 22px;
		box-sizing: border-box;
		border: 1px solid #ababab;
		background: #fff;
		color: #444;
	}

	.combo::after {
		content: '';
		position: absolute;
		top: 50%;
		right: 5px;
		margin-top: -2px;
		border: 3px solid transparent;
		border-top: 4px solid #555;
		border-bottom: 0;
		pointer-events: none;
	}

	.combo select,
	.combo input {
		flex: 1;
		min-width: 0;
		padding-left: 2px;
	}

	.family {
		width: 171px;
		margin-right: 3px;
	}

	.size {
		width: 39px;
		margin-right: 2px;
	}

	.format {
		width: 140px;
	}

	.large {
		display: flex;
		flex-direction: column;
		align-items: center;
		justify-content: flex-start;
		flex: none;
		padding-top: 4px;
		box-sizing: border-box;
	}

	.large :global(svg) {
		margin-bottom: 3px;
	}

	.line {
		display: flex;
		align-items: center;
		height: 15px;
		line-height: 15px;
	}

	.line-caret {
		display: flex;
		padding-left: 4px;
	}

	.line-caret.alone {
		padding-left: 0;
	}

	.line-caret :global(svg) {
		margin: 0;
	}

	.clipboard .large { width: 41px; }
	.plus .large { width: 53px; }
	.edit .large { width: 65px; }
	.quicktools .large { width: 58px; }
	.addins .large,
	.store .large { width: 100%; }

	.edit .stack {
		width: 45px;
	}

	.quicktools .stack {
		width: 90px;
	}

	.quicktools {
		padding-left: 10px;
	}

	.small {
		display: flex;
		align-items: center;
		height: 23px;
	}

	.small-icon {
		padding: 0 3px 0 2px;
	}

	.small-caret {
		padding-left: 4px;
	}

	.small-caret.wide {
		padding-left: 14px;
	}

	.group-name {
		display: flex;
		align-items: center;
		height: 18px;
		padding-right: 8px;
		color: #444;
	}

	.group-name span {
		flex: 1;
		text-align: center;
	}

	.group-name.has-launcher {
		padding-right: 3px;
	}

	.has-launcher span {
		padding-right: 10px;
	}

	.addins .group-name,
	.store .group-name {
		padding-right: 0;
	}

	.collapse {
		align-self: flex-end;
		margin: 0 8px 1px auto;
	}

	/* Formula bar */
	.formula {
		display: flex;
		align-items: center;
		flex: none;
		padding: 11px 8px 11px 5px;
	}

	.formula .combo {
		height: 28px;
		border-color: #c6c6c6;
	}

	.namebox {
		width: 102px;
	}

	.namebox input {
		padding-left: 6px;
	}

	.grip {
		width: 29px;
		text-align: center;
		color: #999;
	}

	.formula-actions {
		display: flex;
		align-items: center;
		justify-content: space-around;
		width: 108px;
		height: 26px;
		margin-right: 4px;
		border: 1px solid #d0d0d0;
		background: #fff;
		box-sizing: content-box;
	}

	.fx {
		font-family: 'Liberation Serif', serif;
		font-size: 16px;
		font-style: italic;
		font-weight: 700;
		color: #555;
	}

	.fx sub {
		font-size: 11px;
		line-height: 8px;
	}

	.formula .formula-field {
		flex: 1;
	}

	/* Grid */
	.sheet {
		display: flex;
		flex: 1;
		min-height: 0;
		border-bottom: 1px solid #999;
	}

	.sheet-view {
		flex: 1;
		min-width: 0;
		overflow: hidden;
	}

	table {
		width: 1673px;
		table-layout: fixed;
		border-spacing: 0;
		font-family: 'Noto Sans CJK SC', sans-serif;
		font-size: 14px;
		color: #333;
	}

	th,
	td {
		height: 18px;
		padding: 0;
		border-right: 1px solid #d4d4d4;
		border-bottom: 1px solid #d4d4d4;
		line-height: 18px;
		text-align: center;
		white-space: nowrap;
	}

	th {
		border-color: #bdbdbd;
		background: #e6e6e6;
		font-weight: 400;
		color: #444;
	}

	td {
		background: #fff;
	}

	.cjk {
		font-size: 15px;
	}

	.corner {
		background: linear-gradient(135deg, transparent 72%, #b4b4b4 72%);
	}

	.r1 td {
		border-color: #ffc000;
		background: #ffc000;
		color: #7a4a00;
	}

	.r1 td:nth-child(2) {
		font-weight: 700;
		color: #2b2000;
	}

	.r2 td {
		border-color: #2f75b5;
		background: #2f75b5;
		color: #14305c;
	}

	.r3 td {
		border-color: #70ad47;
		background: #70ad47;
		color: #1d3a17;
	}

	.r3 td:nth-child(2) {
		border-color: #00b050;
		background: #00b050;
		color: #0a5a2c;
	}

	.vscroll {
		display: flex;
		flex-direction: column;
		align-items: center;
		flex: none;
		width: 21px;
		padding: 1px 0 0;
		box-sizing: border-box;
	}

	.vscroll button,
	.hscroll button {
		display: flex;
		align-items: center;
		justify-content: center;
		width: 15px;
		height: 15px;
		border: 1px solid #aaa;
		box-sizing: border-box;
		background: #fff;
		color: #000;
	}

	.vthumb {
		flex: 1;
		width: 15px;
		margin-bottom: 20px;
		border: 1px solid #aaa;
		box-sizing: border-box;
		background: #f3f3f3;
	}

	.sheet-tabs {
		display: flex;
		align-items: center;
		flex: none;
		height: 28px;
		padding-left: 100px;
		border-bottom: 1px solid #d4d4d4;
		box-sizing: border-box;
	}

	.sheet-tab {
		height: 25px;
		padding: 0 11px;
		border-right: 1px solid #bbb;
		align-self: flex-start;
		font-size: 13px;
		color: #444;
	}

	.sheet-tab.on {
		padding: 0 17px;
		border-bottom: 2px solid #217346;
		background: #fff;
		color: #217346;
	}

	.add-sheet {
		margin-left: 32px;
		color: #777;
	}

	.hscroll {
		display: flex;
		width: 634px;
		margin-left: auto;
		margin-right: 20px;
	}

	.hthumb {
		width: 527px;
		height: 15px;
		border: 1px solid #999;
		box-sizing: border-box;
		background: #f6f6f6;
	}

	.end {
		margin-left: auto;
	}

	.status {
		display: flex;
		align-items: center;
		flex: none;
		gap: 18px;
		height: 22px;
		padding: 0 19px 0 12px;
	}

	.access {
		display: flex;
		align-items: center;
		gap: 3px;
	}

	.views {
		display: flex;
		align-items: center;
		height: 100%;
		margin-left: auto;
	}

	.view {
		display: flex;
		align-items: center;
		justify-content: center;
		width: 40px;
		height: 100%;
		color: #666;
	}

	.view.on {
		background: #c6c6c6;
	}

	.zoom-out {
		margin-left: 8px;
	}

	.views input {
		width: 102px;
		height: 11px;
		margin: 0 4px;
		appearance: none;
		background: linear-gradient(#888, #888) center / 100% 1px no-repeat;
	}

	.views input::-webkit-slider-thumb {
		appearance: none;
		width: 5px;
		height: 11px;
		background: #333;
	}

	.percent {
		margin-left: 16px;
	}

	/* Capture overlay */
	.capture {
		position: absolute;
		top: 59px;
		right: 150px;
		left: 116px;
		height: 501px;
		box-sizing: border-box;
		border: 1px solid #1c9ad6;
		box-shadow: 0 0 0 2000px rgba(0, 0, 0, 0.6);
	}

	.capture-size {
		position: absolute;
		left: 0;
		bottom: 100%;
		padding-bottom: 5px;
		font-size: 13px;
		color: #fff;
		white-space: nowrap;
	}

	.knob {
		position: absolute;
		width: 6px;
		height: 6px;
		margin: -3px;
		border-radius: 50%;
		background: #1ea4e8;
	}

	.tl { top: 0; left: 0; }
	.tc { top: 0; left: 50%; }
	.tr { top: 0; left: 100%; }
	.ml { top: 50%; left: 0; }
	.mr { top: 50%; left: 100%; }
	.bl { top: 100%; left: 0; }
	.bc { top: 100%; left: 50%; }
	.br { top: 100%; left: 100%; }

	.note {
		position: absolute;
		top: 365px;
		left: 588px;
		display: flex;
		align-items: center;
		width: 781px;
		height: 54px;
		padding-left: 5px;
		box-sizing: border-box;
		border: 2px solid #dc3c46;
		color: #e8474f;
		font-size: 29px;
	}

	.note input {
		field-sizing: content;
		line-height: 40px;
	}

	.cursor {
		width: 1px;
		height: 38px;
		background: #222;
	}

	.shot {
		position: absolute;
		top: 100%;
		right: 0;
		display: flex;
		flex-direction: column;
		align-items: flex-start;
		gap: 2px;
		padding-top: 6px;
		color: #444a55;
	}

	.shot-bar,
	.shot-options {
		display: flex;
		align-items: center;
		background: #eceffa;
	}

	.shot-bar {
		height: 32px;
		padding: 0 12px 0 5px;
	}

	.shot-tool {
		position: relative;
		display: flex;
		align-items: center;
		justify-content: center;
		width: 27px;
		height: 27px;
	}

	.shot-tool.on::before {
		content: '';
		position: absolute;
		inset: 3px 2px;
		border: 1px solid #a4a7b0;
		background: rgba(0, 0, 0, 0.08);
	}

	.badge {
		position: absolute;
		top: 3px;
		right: 1px;
		width: 6px;
		height: 6px;
		border-radius: 50%;
		background: #e8602c;
	}

	.shot-sep {
		width: 1px;
		height: 14px;
		margin: 0 2px;
		background: #d0d2dc;
	}

	.done {
		display: flex;
		align-items: center;
		gap: 4px;
		padding-left: 5px;
		color: #222;
	}

	.shot-options {
		height: 37px;
		padding: 0 9px 0 5px;
	}

	.shot-size {
		width: 45px;
		height: 20px;
		margin: 0 13px 0 8px;
		border-color: #e0e2ea;
		font-size: 13px;
		color: #000;
	}

	.shot-size::after {
		border-width: 5px 4px 0;
	}

	.swatch {
		width: 24px;
		height: 26px;
		margin-right: 5px;
		border: 1px solid #b8a0a4;
	}

	.palette {
		display: grid;
		grid-template-columns: repeat(8, 12px);
		gap: 3px;
	}

	.palette button {
		height: 12px;
		border: 1px solid #a0a0a0;
	}

	.watermark {
		position: absolute;
		right: 29px;
		bottom: 27px;
		margin: 0;
		font-family: 'Noto Sans CJK SC', sans-serif;
		font-size: 25px;
		line-height: 36px;
		color: #d0d0d0;
		white-space: nowrap;
	}
</style>
